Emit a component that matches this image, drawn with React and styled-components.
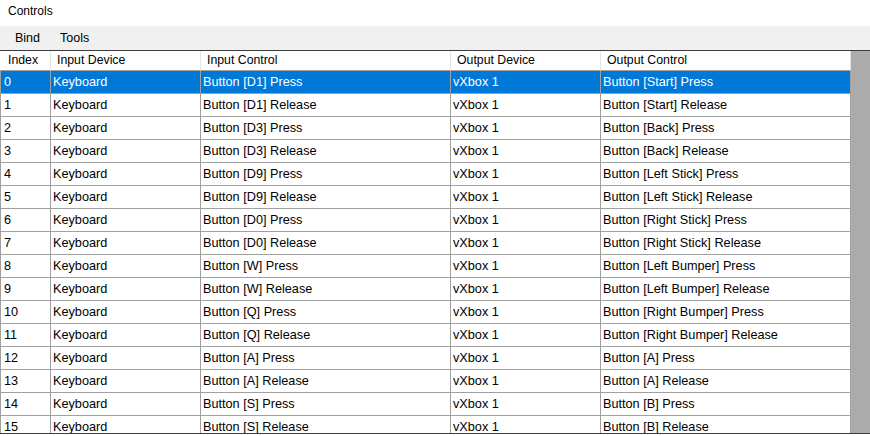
import React from "react";
import styled, { createGlobalStyle } from "styled-components";

const GlobalStyle = createGlobalStyle`
  html, body {
    margin: 0;
    padding: 0;
    background: #ffffff;
  }
  body {
    font-family: "Liberation Sans", Arial, sans-serif;
    color: #000;
  }
`;

const COLUMNS = [
  { key: "index", label: "Index", width: 51 },
  { key: "inDev", label: "Input Device", width: 150 },
  { key: "inCtl", label: "Input Control", width: 250 },
  { key: "outDev", label: "Output Device", width: 150 },
  { key: "outCtl", label: "Output Control", width: 250 },
];

const BINDINGS = [
  ["D1", "Start"],
  ["D3", "Back"],
  ["D9", "Left Stick"],
  ["D0", "Right Stick"],
  ["W", "Left Bumper"],
  ["Q", "Right Bumper"],
  ["A", "A"],
  ["S", "B"],
];

const ROWS = BINDINGS.flatMap(([key, btn]) =>
  ["Press", "Release"].map((action) => ({
    inCtl: `Button [${key}] ${action}`,
    outCtl: `Button [${btn}] ${action}`,
  }))
).map((r, i) => ({
  index: String(i),
  inDev: "Keyboard",
  outDev: "vXbox 1",
  ...r,
}));

const Window = styled.div`
  width: 870px;
  height: 436px;
  display: flex;
  flex-direction: column;
  overflow: hidden;
`;

const TitleBar = styled.div`
  height: 26px;
  padding: 3px 0 0 8px;
  box-sizing: border-box;
  font-size: 12px;
  line-height: 16px;
`;

const MenuBar = styled.div`
  height: 24px;
  background: #f0f0f0;
  display: flex;
  align-items: center;
  padding-left: 5px;
  font-size: 12.5px;
`;

const MenuItem = styled.span`
  padding: 0 10px;
  line-height: 20px;
`;

const GridFrame = styled.div`
  height: 384px;
  display: flex;
  border-top: 1px solid #3c3c3c;
  border-bottom: 1px solid #3c3c3c;
  box-sizing: border-box;
`;

const Table = styled.div`
  width: 851px;
  display: grid;
  grid-template-columns: ${COLUMNS.map((c) => `${c.width}px`).join(" ")};
  grid-auto-rows: max-content;
  overflow: hidden;
  background: #ffffff;
`;

const HeaderCell = styled.div`
  height: 20px;
  box-sizing: border-box;
  padding-left: ${(p) => (p.$first ? 8 : 6)}px;
  border-right: 1px solid #e5e5e5;
  border-bottom: 1px solid #a0a0a0;
  font-size: 12.3px;
  line-height: 19px;
  white-space: nowrap;
  background: #ffffff;
`;

const Cell = styled.div`
  height: 23px;
  box-sizing: border-box;
  padding-left: ${(p) => (p.$first ? 3 : 2)}px;
  border-right: 1px solid #a0a0a0;
  border-bottom: 1px solid #a0a0a0;
  border-left: ${(p) => (p.$first ? "1px solid #a0a0a0" : "none")};
  background: ${(p) => (p.$selected ? "#0078d7" : "#ffffff")};
  color: ${(p) => (p.$selected ? "#ffffff" : "#000000")};
  font-size: 12.7px;
  line-height: 22px;
  white-space: nowrap;
  overflow: hidden;
`;

const ScrollArea = styled.div`
  flex: 1;
  background: #ababab;
`;

export default function App() {
  return (
    <>
      <GlobalStyle />
      <Window>
        <TitleBar>Controls</TitleBar>
        <MenuBar>
          <MenuItem>Bind</MenuItem>
          <MenuItem>Tools</MenuItem>
        </MenuBar>
        <GridFrame>
          <Table>
            {COLUMNS.map((c, i) => (
              <HeaderCell key={c.key} $first={i === 0}>
                {c.label}
              </HeaderCell>
            ))}
            {ROWS.map((row, r) =>
              COLUMNS.map((c, i) => (
                <Cell key={`${r}-${c.key}`} $first={i === 0} $selected={r === 0}>
                  {row[c.key]}
                </Cell>
              ))
            )}
          </Table>
          <ScrollArea />
        </GridFrame>
      </Window>
    </>
  );
}
